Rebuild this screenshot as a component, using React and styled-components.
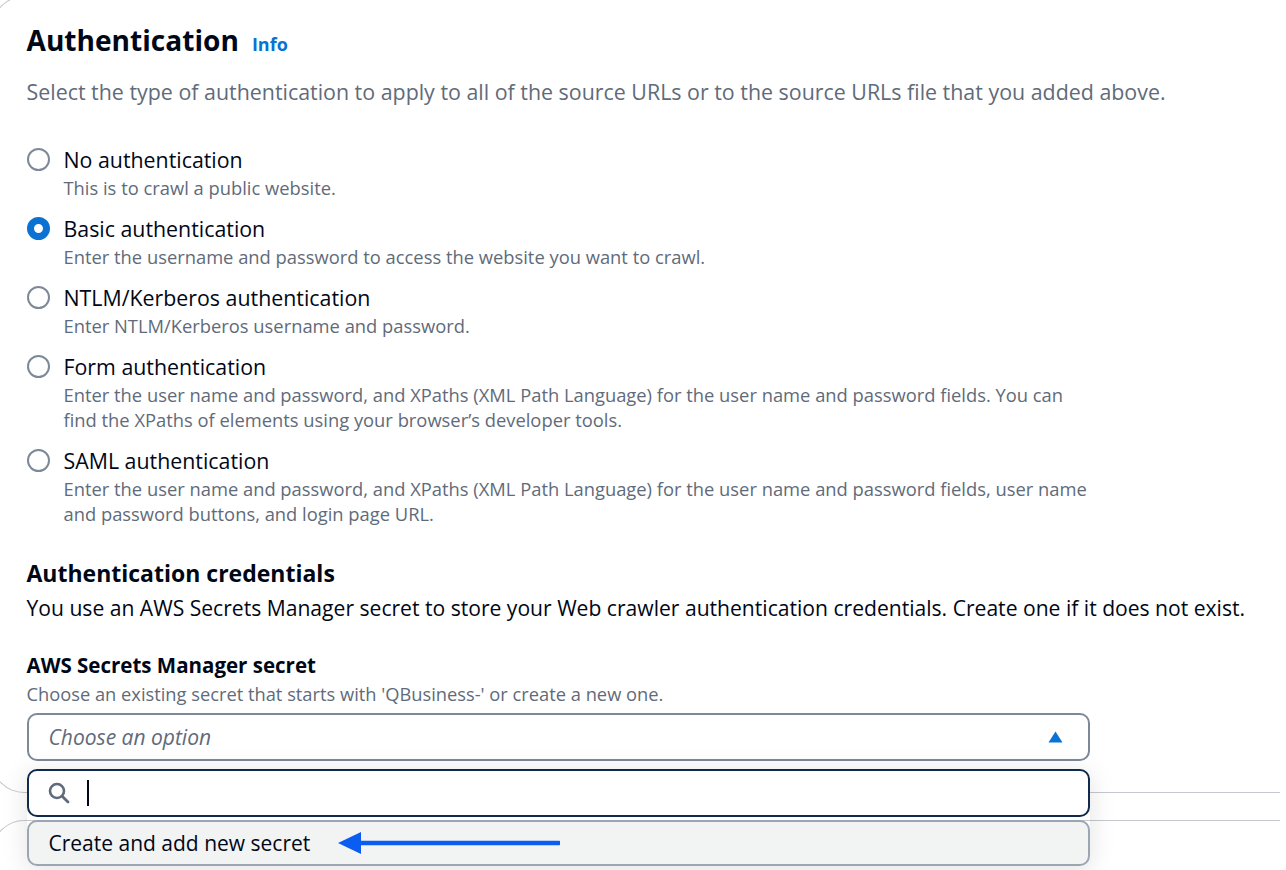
import React from "react";
import styled, { createGlobalStyle } from "styled-components";

const Global = createGlobalStyle`
  html, body { margin: 0; padding: 0; background: #ffffff; }
  body {
    font-family: "Open Sans", "Noto Sans", Arial, sans-serif;
    color: #000716;
    -webkit-font-smoothing: antialiased;
  }
  * { box-sizing: border-box; }
`;

const Page = styled.div`
  width: 1286px;
  height: 870px;
  overflow: hidden;
  background: #ffffff;
`;

const Card = styled.section`
  margin: ${(p) => p.$top}px 6px 0 -8px;
  border: 1.5px solid #c6c6cd;
  border-right: none;
  border-radius: 32px 0 0 32px;
  padding: ${(p) => p.$pad};
  min-height: ${(p) => p.$minH || 0}px;
`;

const HeadingRow = styled.div`
  display: flex;
  align-items: baseline;
  gap: 13px;
`;

const Title = styled.h2`
  margin: 0;
  font-size: 28.1px;
  line-height: 40px;
  font-weight: 700;
  color: #000716;
`;

const InfoLink = styled.a`
  font-size: 18px;
  font-weight: 700;
  color: #0972d3;
  text-decoration: none;
`;

const Lead = styled.p`
  margin: ${(p) => p.$mt}px 0 0;
  font-size: ${(p) => p.$size}px;
  line-height: 30px;
  color: ${(p) => (p.$strong ? "#000716" : "#5f6b7a")};
  white-space: nowrap;
`;

const RadioGroup = styled.div`
  margin-top: 38px;
  width: 1063px;
  display: flex;
  flex-direction: column;
  gap: 14px;
`;

const RadioItem = styled.label`
  display: grid;
  grid-template-columns: 23px 1fr;
  column-gap: 14px;
`;

const RadioCircle = styled.span`
  width: 23px;
  height: 23px;
  margin-top: 3.5px;
  border-radius: 50%;
  background: #ffffff;
  border: ${(p) => (p.$checked ? "7.5px solid #0972d3" : "2px solid #7d8998")};
`;

const RadioText = styled.span`
  display: flex;
  flex-direction: column;
`;

const RadioLabel = styled.span`
  font-size: 21.35px;
  line-height: 30px;
  color: #000716;
`;

const RadioDesc = styled.span`
  font-size: 18.35px;
  line-height: 25px;
  color: #5f6b7a;
`;

const SubTitle = styled.h3`
  margin: 31.5px 0 0;
  font-size: 23px;
  line-height: 32px;
  font-weight: 700;
  color: #000716;
`;

const Field = styled.div`
  margin-top: 28px;
  width: 1063px;
`;

const FieldLabel = styled.div`
  font-size: 20.5px;
  line-height: 28px;
  font-weight: 700;
  color: #000716;
`;

const FieldHint = styled.div`
  margin-top: 1.5px;
  font-size: 18.3px;
  line-height: 25px;
  color: #5f6b7a;
`;

const SelectWrap = styled.div`
  position: relative;
  margin-top: 7.5px;
`;

const SelectTrigger = styled.div`
  height: 48px;
  border: 2px solid #7d8998;
  border-radius: 10px;
  background: #ffffff;
  display: flex;
  align-items: center;
  justify-content: space-between;
  padding: 0 25px 0 20px;
`;

const Placeholder = styled.span`
  font-size: 21px;
  font-style: italic;
  color: #5f6b7a;
`;

const Dropdown = styled.div`
  position: absolute;
  top: calc(100% + 8px);
  left: 0;
  right: 0;
  z-index: 2;
  display: flex;
  flex-direction: column;
  gap: 3px;
  border-radius: 10px;
  box-shadow: 0 4px 24px 2px rgba(0, 7, 22, 0.1);
`;

const SearchBox = styled.div`
  height: 48px;
  border: 2px solid #0f2a4d;
  border-radius: 10px;
  background: #ffffff;
  display: flex;
  align-items: center;
  gap: 17px;
  padding-left: 19px;
`;

const Caret = styled.span`
  width: 2px;
  height: 26px;
  background: #000716;
`;

const Option = styled.div`
  height: 46px;
  border: 2px solid #9ba6b2;
  border-radius: 10px;
  background: #f2f3f3;
  display: flex;
  align-items: center;
  padding-left: 20px;
  font-size: 21px;
  color: #000716;
`;

const Pointer = styled.svg`
  margin-left: 28px;
  flex: none;
`;

const options = [
  {
    label: "No authentication",
    desc: ["This is to crawl a public website."],
  },
  {
    label: "Basic authentication",
    desc: ["Enter the username and password to access the website you want to crawl."],
    checked: true,
  },
  {
    label: "NTLM/Kerberos authentication",
    desc: ["Enter NTLM/Kerberos username and password."],
  },
  {
    label: "Form authentication",
    desc: [
      "Enter the user name and password, and XPaths (XML Path Language) for the user name and password fields. You can",
      "find the XPaths of elements using your browser\u2019s developer tools.",
    ],
  },
  {
    label: "SAML authentication",
    desc: [
      "Enter the user name and password, and XPaths (XML Path Language) for the user name and password fields, user name",
      "and password buttons, and login page URL.",
    ],
  },
];

export default function App() {
  return (
    <>
      <Global />
      <Page>
        <Card $top={-4} $pad="22.5px 0 30.5px 33.5px">
          <HeadingRow>
            <Title>Authentication</Title>
            <InfoLink>Info</InfoLink>
          </HeadingRow>
          <Lead $mt={17} $size={21.4}>
            Select the type of authentication to apply to all of the source URLs or to the source URLs file that you added above.
          </Lead>

          <RadioGroup>
            {options.map((o) => (
              <RadioItem key={o.label}>
                <RadioCircle $checked={o.checked} />
                <RadioText>
                  <RadioLabel>{o.label}</RadioLabel>
                  {o.desc.map((d) => (
                    <RadioDesc key={d}>{d}</RadioDesc>
                  ))}
                </RadioText>
              </RadioItem>
            ))}
          </RadioGroup>

          <SubTitle>Authentication credentials</SubTitle>
          <Lead $mt={4} $size={21.1} $strong>
            You use an AWS Secrets Manager secret to store your Web crawler authentication credentials. Create one if it does not exist.
          </Lead>

          <Field>
            <FieldLabel>AWS Secrets Manager secret</FieldLabel>
            <FieldHint>Choose an existing secret that starts with 'QBusiness-' or create a new one.</FieldHint>
            <SelectWrap>
              <SelectTrigger>
                <Placeholder>Choose an option</Placeholder>
                <svg width="15" height="12" viewBox="0 0 15 12">
                  <path d="M7.5 0.5 L14.5 11.5 L0.5 11.5 Z" fill="#0972d3" />
                </svg>
              </SelectTrigger>
              <Dropdown>
                <SearchBox>
                  <svg width="22" height="22" viewBox="0 0 22 22" fill="none">
                    <circle cx="9" cy="9" r="7" stroke="#5f6b7a" strokeWidth="2.6" />
                    <path d="M14.2 14.2 L20 20" stroke="#5f6b7a" strokeWidth="2.8" strokeLinecap="round" />
                  </svg>
                  <Caret />
                </SearchBox>
                <Option>
                  Create and add new secret
                  <Pointer width="222" height="22" viewBox="0 0 222 22">
                    <path d="M0 11 L23 0 L23 22 Z" fill="#0b5cf0" />
                    <path d="M20 11 L221 11" stroke="#0b5cf0" strokeWidth="4.5" strokeLinecap="round" />
                  </Pointer>
                </Option>
              </Dropdown>
            </SelectWrap>
          </Field>
        </Card>
        <Card $top={27} $pad="0" $minH={200} />
      </Page>
    </>
  );
}
